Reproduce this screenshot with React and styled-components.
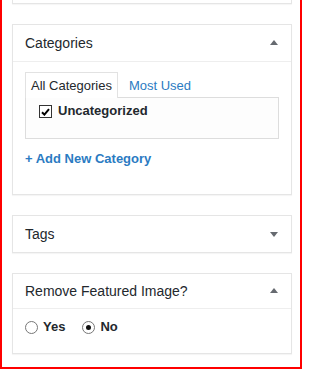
import styled, { createGlobalStyle } from "styled-components"

const GlobalStyle = createGlobalStyle`
  html, body {
    margin: 0;
    padding: 0;
    background: #fff;
  }
  body {
    font-family: "Liberation Sans", Arial, sans-serif;
    color: #23282d;
  }
`

const Frame = styled.div`
  width: 302px;
  height: 369px;
  box-sizing: border-box;
  border: 2px solid #ff0000;
  border-top: none;
  background: #fff;
  overflow: hidden;
  padding-left: 10px;
  padding-right: 8px;
`

const Box = styled.div`
  width: 280px;
  box-sizing: border-box;
  background: #fff;
  border: 1px solid #e5e5e5;
  box-shadow: 0 1px 1px rgba(0, 0, 0, 0.04);
  margin-bottom: 20px;
`

const Stub = styled(Box)`
  height: 4px;
  border-top: none;
`

const Header = styled.div`
  height: ${props => props.h || 36}px;
  display: flex;
  align-items: center;
  justify-content: space-between;
  padding: 0 13px 0 12px;
  font-size: 14px;
  color: #23282d;
  border-bottom: ${props => (props.open ? "1px solid #eee" : "none")};
`

const Arrow = styled.svg`
  width: 8px;
  height: 5px;
  fill: #666a70;
  margin-top: ${props => (props.up ? "-1px" : "1px")};
`

const Inside = styled.div`
  padding: ${props => props.pad || "10px 12px 12px"};
`

const Tabs = styled.div`
  display: flex;
  align-items: stretch;
  font-size: 13px;
  position: relative;
  z-index: 1;
`

const Tab = styled.div`
  height: 26px;
  box-sizing: border-box;
  display: flex;
  align-items: center;
  padding: 0 ${props => (props.active ? "5px" : "0")} 1px 5px;
  margin-left: ${props => (props.active ? "0" : "5px")};
  margin-bottom: -1px;
  color: ${props => (props.active ? "#23282d" : "#2b7bc2")};
  background: ${props => (props.active ? "#fff" : "transparent")};
  border: 1px solid ${props => (props.active ? "#e2e2e2" : "transparent")};
  border-bottom: none;
`

const ListBox = styled.div`
  width: 254px;
  height: 42px;
  box-sizing: border-box;
  border: 1px solid #dddddd;
  background: #fdfdfd;
  padding: 4px 13px 0;
`

const CheckRow = styled.label`
  display: flex;
  align-items: center;
  gap: 6px;
  font-size: 13px;
  font-weight: bold;
  color: #23282d;
`

const CheckBox = styled.span`
  width: 13px;
  height: 13px;
  box-sizing: border-box;
  border: 1px solid #333;
  background: #fff;
  display: flex;
  align-items: center;
  justify-content: center;
  margin-top: 3px;
`

const AddLink = styled.a`
  display: block;
  margin-top: 11px;
  margin-bottom: 14px;
  font-size: 13px;
  line-height: 18px;
  font-weight: bold;
  color: #2b7bc2;
  text-decoration: none;
`

const RadioRow = styled.div`
  display: flex;
  align-items: center;
  gap: 17px;
  height: 34px;
  padding-bottom: 10px;
`

const RadioLabel = styled.label`
  display: flex;
  align-items: center;
  gap: 5px;
  font-size: 13px;
  font-weight: bold;
  color: #23282d;
`

const Radio = styled.span`
  width: 13px;
  height: 13px;
  box-sizing: border-box;
  border-radius: 50%;
  border: 1px solid #777;
  background: #fff;
  display: flex;
  align-items: center;
  justify-content: center;
  margin-top: 2px;

  &::after {
    content: "";
    width: 5px;
    height: 5px;
    border-radius: 50%;
    background: ${props => (props.checked ? "#111" : "transparent")};
  }
`

function Toggle({ up }) {
  return (
    <Arrow up={up} viewBox="0 0 8 5">
      {up ? <polygon points="0,5 4,0 8,5" /> : <polygon points="0,0 8,0 4,5" />}
    </Arrow>
  )
}

function App() {
  return (
    <>
      <GlobalStyle />
      <Frame>
        <Stub />

        <Box>
          <Header open>
            <span>Categories</span>
            <Toggle up />
          </Header>
          <Inside pad="10px 12px 12px">
            <Tabs>
              <Tab active>All Categories</Tab>
              <Tab>Most Used</Tab>
            </Tabs>
            <ListBox>
              <CheckRow>
                <CheckBox>
                  <svg width="9" height="8" viewBox="0 0 9 8">
                    <path d="M1 4.2 L3.4 6.6 L8 1.2" fill="none" stroke="#000" strokeWidth="2" />
                  </svg>
                </CheckBox>
                Uncategorized
              </CheckRow>
            </ListBox>
            <AddLink href="#">+ Add New Category</AddLink>
          </Inside>
        </Box>

        <Box>
          <Header>
            <span>Tags</span>
            <Toggle />
          </Header>
        </Box>

        <Box>
          <Header open h={34}>
            <span>Remove Featured Image?</span>
            <Toggle up />
          </Header>
          <Inside pad="0 12px">
            <RadioRow>
              <RadioLabel>
                <Radio />
                Yes
              </RadioLabel>
              <RadioLabel>
                <Radio checked />
                No
              </RadioLabel>
            </RadioRow>
          </Inside>
        </Box>
      </Frame>
    </>
  )
}

export default App
